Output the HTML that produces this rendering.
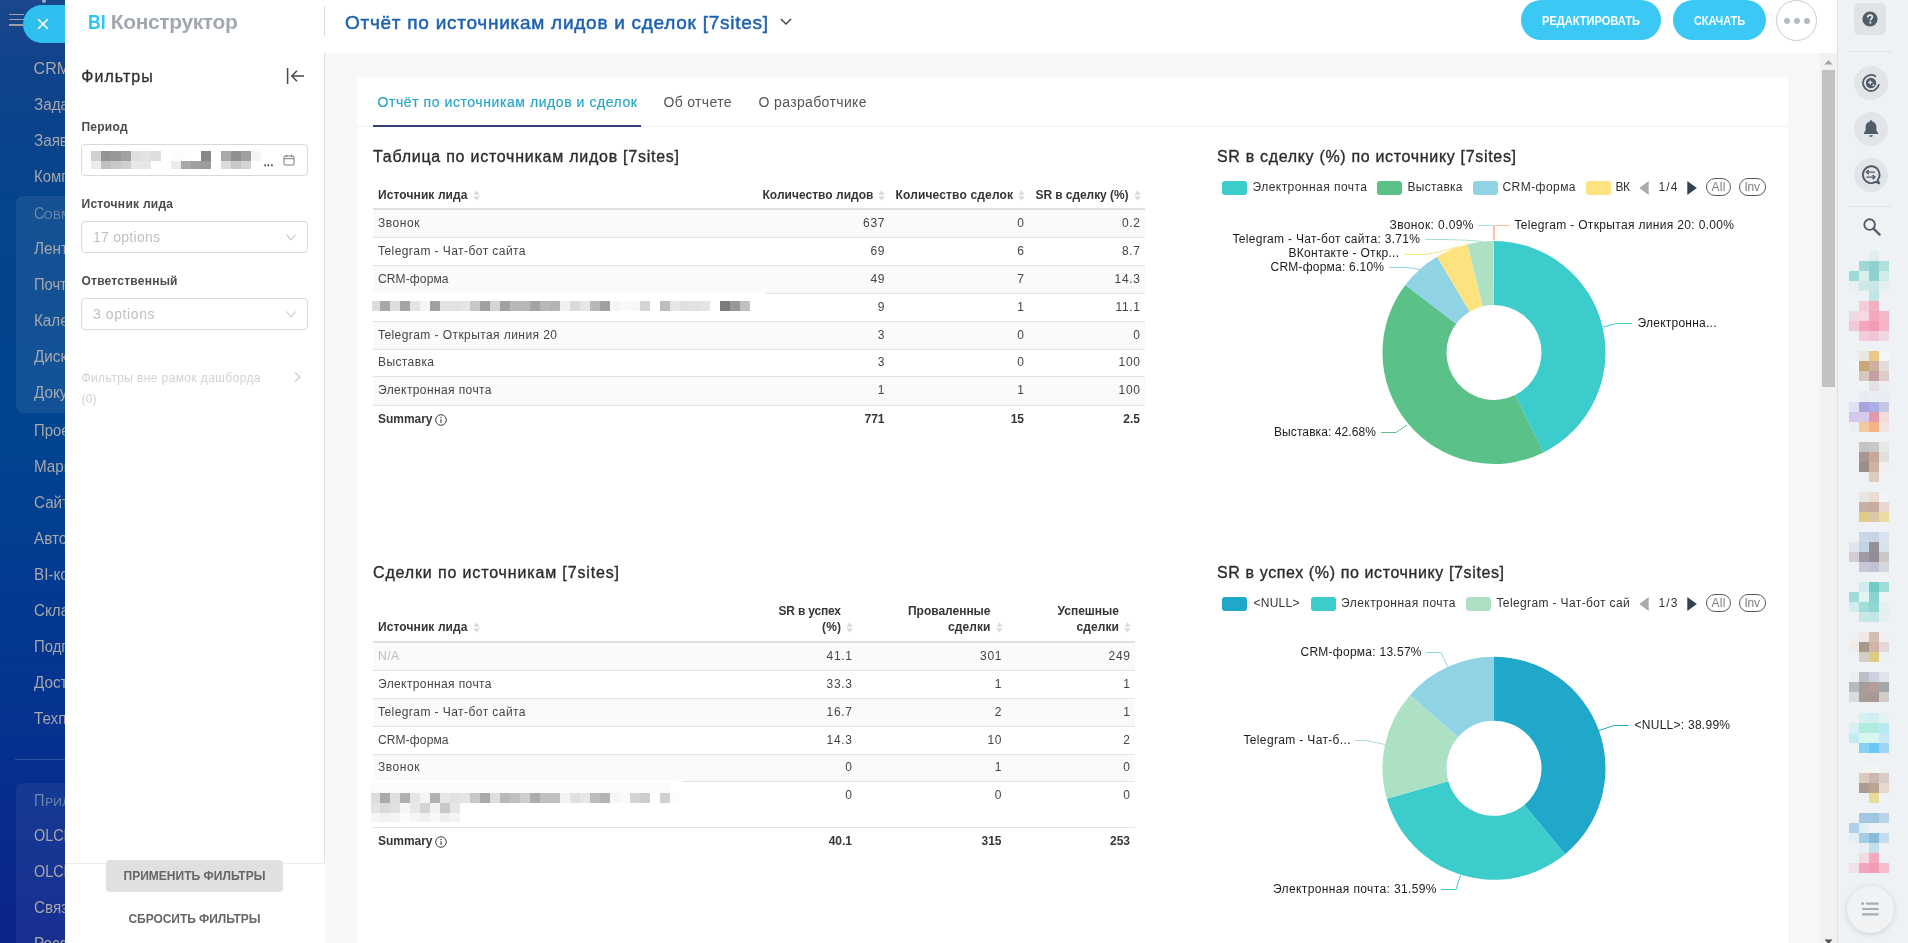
<!DOCTYPE html>
<html lang="ru"><head><meta charset="utf-8"><title>BI Конструктор</title>
<style>
html,body{margin:0;padding:0;}
body{width:1908px;height:943px;overflow:hidden;position:relative;background:#fff;font-family:"Liberation Sans",sans-serif;}
.t{position:absolute;white-space:nowrap;margin:0;padding:0;}
.b{position:absolute;box-sizing:border-box;}
svg{position:absolute;overflow:visible;}
</style></head><body><div style="position:absolute;left:0;top:0;width:1908px;height:943px;overflow:hidden;will-change:transform;">
<div class="b" style="left:0px;top:0px;width:66px;height:943px;background:linear-gradient(180deg,#1b478b 0%,#10438c 7%,#04448b 21%,#00458f 45%,#023b91 61%,#06308f 80%,#0a238b 100%);"></div>
<div class="b" style="left:16px;top:196px;width:60px;height:217px;background:rgba(255,255,255,0.07);border-radius:8px 0 0 8px;"></div>
<div class="b" style="left:16px;top:783px;width:60px;height:170px;background:rgba(255,255,255,0.06);border-radius:8px 0 0 8px;"></div>
<div class="b" style="left:15px;top:759px;width:51px;height:1px;background:rgba(255,255,255,0.16);"></div>
<div class="b" style="left:9px;top:13.6px;width:15px;height:1.5px;background:#a3a1a8;"></div>
<div class="b" style="left:9px;top:18.9px;width:15px;height:1.5px;background:#a3a1a8;"></div>
<div class="b" style="left:9px;top:24.2px;width:15px;height:1.5px;background:#a3a1a8;"></div>
<div class="b" style="left:0;top:0;width:65px;height:943px;overflow:hidden;">
<div class="t" style="left:33.60px;top:57.59px;font-size:16px;line-height:22px;color:#a8a7a9;transform:scaleX(1.0);transform-origin:0 0;">CRM</div>
<div class="t" style="left:33.60px;top:93.59px;font-size:16px;line-height:22px;color:#a8a7a9;transform:scaleX(0.95);transform-origin:0 0;">Задачи</div>
<div class="t" style="left:33.60px;top:129.59px;font-size:16px;line-height:22px;color:#a8a7a9;transform:scaleX(0.95);transform-origin:0 0;">Заявки</div>
<div class="t" style="left:33.60px;top:165.59px;font-size:16px;line-height:22px;color:#a8a7a9;transform:scaleX(0.93);transform-origin:0 0;">Компания</div>
<div class="t" style="left:33.60px;top:237.59px;font-size:16px;line-height:22px;color:#a8a7a9;transform:scaleX(0.96);transform-origin:0 0;">Лента</div>
<div class="t" style="left:33.60px;top:273.59px;font-size:16px;line-height:22px;color:#a8a7a9;transform:scaleX(0.92);transform-origin:0 0;">Почта</div>
<div class="t" style="left:33.60px;top:309.59px;font-size:16px;line-height:22px;color:#a8a7a9;transform:scaleX(0.95);transform-origin:0 0;">Календарь</div>
<div class="t" style="left:33.60px;top:345.59px;font-size:16px;line-height:22px;color:#a8a7a9;transform:scaleX(0.95);transform-origin:0 0;">Диск</div>
<div class="t" style="left:33.60px;top:381.59px;font-size:16px;line-height:22px;color:#a8a7a9;transform:scaleX(0.95);transform-origin:0 0;">Документы</div>
<div class="t" style="left:33.60px;top:419.69px;font-size:16px;line-height:22px;color:#a8a7a9;transform:scaleX(0.93);transform-origin:0 0;">Проекты</div>
<div class="t" style="left:33.60px;top:455.69px;font-size:16px;line-height:22px;color:#a8a7a9;transform:scaleX(0.95);transform-origin:0 0;">Маркетинг</div>
<div class="t" style="left:33.60px;top:491.69px;font-size:16px;line-height:22px;color:#a8a7a9;transform:scaleX(0.95);transform-origin:0 0;">Сайты</div>
<div class="t" style="left:33.60px;top:527.69px;font-size:16px;line-height:22px;color:#a8a7a9;transform:scaleX(0.95);transform-origin:0 0;">Автоматизация</div>
<div class="t" style="left:33.60px;top:563.69px;font-size:16px;line-height:22px;color:#a8a7a9;transform:scaleX(0.95);transform-origin:0 0;">BI-конструктор</div>
<div class="t" style="left:33.60px;top:599.69px;font-size:16px;line-height:22px;color:#a8a7a9;transform:scaleX(0.95);transform-origin:0 0;">Складской учёт</div>
<div class="t" style="left:33.60px;top:635.69px;font-size:16px;line-height:22px;color:#a8a7a9;transform:scaleX(0.93);transform-origin:0 0;">Подпись</div>
<div class="t" style="left:33.60px;top:671.69px;font-size:16px;line-height:22px;color:#a8a7a9;transform:scaleX(0.95);transform-origin:0 0;">Доступы</div>
<div class="t" style="left:33.60px;top:707.69px;font-size:16px;line-height:22px;color:#a8a7a9;transform:scaleX(0.95);transform-origin:0 0;">Техподдержка</div>
<div class="t" style="left:33.60px;top:824.69px;font-size:16px;line-height:22px;color:#a8a7a9;transform:scaleX(0.9);transform-origin:0 0;">OLCHA</div>
<div class="t" style="left:33.60px;top:860.69px;font-size:16px;line-height:22px;color:#a8a7a9;transform:scaleX(0.9);transform-origin:0 0;">OLCHA</div>
<div class="t" style="left:33.60px;top:896.69px;font-size:16px;line-height:22px;color:#a8a7a9;transform:scaleX(0.95);transform-origin:0 0;">Связь</div>
<div class="t" style="left:33.60px;top:932.69px;font-size:16px;line-height:22px;color:#a8a7a9;transform:scaleX(0.95);transform-origin:0 0;">Россия</div>
<div class="t" style="left:33.60px;top:202.69px;font-size:16px;line-height:22px;color:#6e89ab;transform:scaleX(0.9);transform-origin:0 0;">С</div>
<div class="t" style="left:43.60px;top:206.84px;font-size:11.8px;line-height:17px;color:#6e89ab;letter-spacing:0.3px;">ОВМЕСТНАЯ</div>
<div class="t" style="left:33.60px;top:789.69px;font-size:16px;line-height:22px;color:#6e89ab;transform:scaleX(0.9);transform-origin:0 0;">П</div>
<div class="t" style="left:45.20px;top:793.84px;font-size:11.8px;line-height:17px;color:#6e89ab;letter-spacing:0.3px;">РИЛОЖЕНИЯ</div>
</div>
<div class="b" style="left:42px;top:0px;width:3.5px;height:3.2px;background:rgba(255,255,255,0.55);border-radius:0 0 2px 2px;"></div>
<div class="b" style="left:65px;top:0px;width:1772px;height:943px;background:#fff;"></div>
<div class="b" style="left:23px;top:5px;width:42px;height:38px;background:#2fc0f0;border-radius:19px 0 0 19px;"></div>
<svg style="left:37px;top:18px" width="12" height="12" viewBox="0 0 12 12"><path d="M1.2 1.2 L10.8 10.8 M10.8 1.2 L1.2 10.8" stroke="#fff" stroke-width="1.6" fill="none"/></svg>
<div class="t" style="left:88.30px;top:7.35px;font-size:21px;line-height:29px;color:#2fc6f6;font-weight:700;transform:scaleX(0.8381);transform-origin:0 0;">BI</div>
<div class="t" style="left:110.80px;top:7.35px;font-size:21px;line-height:29px;color:#a3a8b0;font-weight:700;letter-spacing:-0.370px;">Конструктор</div>
<div class="b" style="left:324px;top:6px;width:1px;height:30px;background:#d5d9e0;"></div>
<div class="t" style="left:345.00px;top:8.73px;font-size:19px;line-height:27px;color:#1d62b0;letter-spacing:0.732px;-webkit-text-stroke:0.5px #1d62b0;">Отчёт по источникам лидов и сделок [7sites]</div>
<svg style="left:780px;top:17px" width="12" height="10" viewBox="0 0 12 10"><path d="M0.9 2 L6 7 L11.1 2" stroke="#3a4652" stroke-width="1.5" fill="none"/></svg>
<div class="b" style="left:1521px;top:0px;width:140px;height:40px;background:#3bc8f5;border-radius:20px;"></div>
<div class="t" style="left:1542.00px;top:12.84px;font-size:12px;line-height:17px;color:#fff;font-weight:700;transform:scaleX(0.9239);transform-origin:0 0;">РЕДАКТИРОВАТЬ</div>
<div class="b" style="left:1673px;top:0px;width:93px;height:40px;background:#3bc8f5;border-radius:20px;"></div>
<div class="t" style="left:1694.00px;top:12.84px;font-size:12px;line-height:17px;color:#fff;font-weight:700;transform:scaleX(0.9075);transform-origin:0 0;">СКАЧАТЬ</div>
<div class="b" style="left:1776px;top:0px;width:41px;height:41px;background:#fff;border-radius:50%;border:1px solid #c6cdd3;"></div>
<div class="b" style="left:1783.5px;top:17.5px;width:6px;height:6px;background:#b5babf;border-radius:50%;"></div>
<div class="b" style="left:1793.5px;top:17.5px;width:6px;height:6px;background:#b5babf;border-radius:50%;"></div>
<div class="b" style="left:1803.5px;top:17.5px;width:6px;height:6px;background:#b5babf;border-radius:50%;"></div>
<div class="b" style="left:324px;top:53px;width:1px;height:811px;background:#e2e3e6;"></div>
<div class="t" style="left:81.20px;top:65.59px;font-size:16px;line-height:22px;color:#303030;letter-spacing:1.058px;-webkit-text-stroke:0.3px #303030;">Фильтры</div>
<svg style="left:286px;top:68px" width="19" height="16" viewBox="0 0 19 16"><path d="M1.6 0 V16 M18 8 H6 M11 2.8 L5.8 8 L11 13.2" stroke="#484848" stroke-width="1.5" fill="none"/></svg>
<div class="t" style="left:81.50px;top:118.64px;font-size:12px;line-height:17px;color:#4c4c4c;font-weight:700;letter-spacing:0.241px;">Период</div>
<div class="b" style="left:81px;top:144px;width:227px;height:32px;background:#fff;border:1px solid #d9d9d9;border-radius:4px;"></div>
<div class="t" style="left:81.50px;top:195.64px;font-size:12px;line-height:17px;color:#4c4c4c;font-weight:700;letter-spacing:0.269px;">Источник лида</div>
<div class="b" style="left:81px;top:221px;width:227px;height:32px;background:#fff;border:1px solid #d9d9d9;border-radius:4px;"></div>
<div class="t" style="left:93.00px;top:226.97px;font-size:14px;line-height:20px;color:#bfbfbf;letter-spacing:0.266px;">17 options</div>
<div class="t" style="left:81.50px;top:272.64px;font-size:12px;line-height:17px;color:#4c4c4c;font-weight:700;letter-spacing:0.231px;">Ответственный</div>
<div class="b" style="left:81px;top:298px;width:227px;height:32px;background:#fff;border:1px solid #d9d9d9;border-radius:4px;"></div>
<div class="t" style="left:93.00px;top:303.97px;font-size:14px;line-height:20px;color:#bfbfbf;letter-spacing:0.585px;">3 options</div>
<svg style="left:285px;top:233px" width="12" height="9" viewBox="0 0 12 9"><path d="M1.5 1.5 L6 7 L10.5 1.5" stroke="#c4c4c4" stroke-width="1.1" fill="none"/></svg>
<svg style="left:285px;top:310px" width="12" height="9" viewBox="0 0 12 9"><path d="M1.5 1.5 L6 7 L10.5 1.5" stroke="#c4c4c4" stroke-width="1.1" fill="none"/></svg>
<svg style="left:283px;top:154px" width="12" height="12" viewBox="0 0 12 12"><rect x="1" y="2" width="10" height="9" rx="1" stroke="#787878" stroke-width="1" fill="none"/><path d="M1 4.7 H11 M3.5 0.8 V3 M8.5 0.8 V3" stroke="#787878" stroke-width="1" fill="none"/></svg>
<div class="t" style="left:263.50px;top:153.64px;font-size:12px;line-height:17px;color:#333;letter-spacing:-0.001px;-webkit-text-stroke:0.3px #333;">...</div>
<div class="t" style="left:81.50px;top:369.64px;font-size:12px;line-height:17px;color:#d2d2d2;letter-spacing:0.398px;">Фильтры вне рамок дашборда</div>
<div class="t" style="left:81.50px;top:391.14px;font-size:12px;line-height:17px;color:#d2d2d2;letter-spacing:0.167px;">(0)</div>
<svg style="left:293px;top:371px" width="9" height="12" viewBox="0 0 9 12"><path d="M2 1.5 L7 6 L2 10.5" stroke="#c8c8c8" stroke-width="1.1" fill="none"/></svg>
<div class="b" style="left:65px;top:863px;width:260px;height:1px;background:#ececec;"></div>
<div class="b" style="left:106px;top:860px;width:177px;height:32px;background:#e0e0e0;border-radius:4px;"></div>
<div class="t" style="left:123.50px;top:867.84px;font-size:12px;line-height:17px;color:#666666;font-weight:700;letter-spacing:0.024px;">ПРИМЕНИТЬ ФИЛЬТРЫ</div>
<div class="t" style="left:128.50px;top:911.24px;font-size:12px;line-height:17px;color:#666666;font-weight:700;letter-spacing:-0.055px;">СБРОСИТЬ ФИЛЬТРЫ</div>
<div class="b" style="left:325px;top:53px;width:1512px;height:890px;background:#f7f7f7;"></div>
<div class="b" style="left:357px;top:77px;width:1431px;height:866px;background:#fff;"></div>
<div class="b" style="left:1820px;top:53px;width:17px;height:890px;background:#f1f1f1;"></div>
<div class="b" style="left:1822px;top:70px;width:13px;height:317px;background:#c1c1c1;"></div>
<svg style="left:1824px;top:58.5px" width="9" height="6" viewBox="0 0 9 6"><path d="M0.5 5.5 L4.5 1 L8.5 5.5 Z" fill="#a3a3a3"/></svg>
<svg style="left:1824px;top:938.5px" width="9" height="6" viewBox="0 0 9 6"><path d="M0.5 0.5 L4.5 5 L8.5 0.5 Z" fill="#505050"/></svg>
<div class="b" style="left:357px;top:126px;width:1431px;height:1px;background:#f0f0f0;"></div>
<div class="b" style="left:373px;top:125px;width:268px;height:2px;background:#364080;"></div>
<div class="t" style="left:377.50px;top:92.17px;font-size:14px;line-height:20px;color:#27a5cb;letter-spacing:0.567px;-webkit-text-stroke:0.2px #27a5cb;">Отчёт по источникам лидов и сделок</div>
<div class="t" style="left:663.50px;top:92.17px;font-size:14px;line-height:20px;color:#555;letter-spacing:0.332px;">Об отчете</div>
<div class="t" style="left:758.50px;top:92.17px;font-size:14px;line-height:20px;color:#555;letter-spacing:0.363px;">О разработчике</div>
<div class="t" style="left:373.00px;top:145.69px;font-size:16px;line-height:22px;color:#2b2b2b;letter-spacing:0.750px;-webkit-text-stroke:0.33px #2b2b2b;">Таблица по источникам лидов [7sites]</div>
<div class="t" style="left:378.00px;top:186.64px;font-size:12px;line-height:17px;color:#363636;font-weight:700;letter-spacing:0.102px;">Источник лида</div>
<svg style="left:473px;top:189.5px" width="7" height="11" viewBox="0 0 7 11"><path d="M0.2 4.7 L3.5 0.3 L6.8 4.7 Z M0.2 6.3 L3.5 10.7 L6.8 6.3 Z" fill="#dadada"/></svg>
<div class="t" style="left:762.50px;top:186.64px;font-size:12px;line-height:17px;color:#363636;font-weight:700;letter-spacing:0.027px;">Количество лидов</div>
<svg style="left:878.4px;top:189.5px" width="7" height="11" viewBox="0 0 7 11"><path d="M0.2 4.7 L3.5 0.3 L6.8 4.7 Z M0.2 6.3 L3.5 10.7 L6.8 6.3 Z" fill="#dadada"/></svg>
<div class="t" style="left:895.50px;top:186.64px;font-size:12px;line-height:17px;color:#363636;font-weight:700;letter-spacing:0.154px;">Количество сделок</div>
<svg style="left:1017.6px;top:189.5px" width="7" height="11" viewBox="0 0 7 11"><path d="M0.2 4.7 L3.5 0.3 L6.8 4.7 Z M0.2 6.3 L3.5 10.7 L6.8 6.3 Z" fill="#dadada"/></svg>
<div class="t" style="left:1035.50px;top:186.64px;font-size:12px;line-height:17px;color:#363636;font-weight:700;letter-spacing:-0.070px;">SR в сделку (%)</div>
<svg style="left:1133.8px;top:189.5px" width="7" height="11" viewBox="0 0 7 11"><path d="M0.2 4.7 L3.5 0.3 L6.8 4.7 Z M0.2 6.3 L3.5 10.7 L6.8 6.3 Z" fill="#dadada"/></svg>
<div class="b" style="left:373px;top:208px;width:772px;height:2px;background:#e0e0e0;"></div>
<div class="b" style="left:373px;top:210px;width:772px;height:27px;background:#fafafa;"></div>
<div class="b" style="left:373px;top:266px;width:772px;height:27px;background:#fafafa;"></div>
<div class="b" style="left:373px;top:322px;width:772px;height:27px;background:#fafafa;"></div>
<div class="b" style="left:373px;top:377px;width:772px;height:28px;background:#fafafa;"></div>
<div class="b" style="left:373px;top:237px;width:772px;height:1px;background:#e4e4e4;"></div>
<div class="b" style="left:373px;top:265px;width:772px;height:1px;background:#e4e4e4;"></div>
<div class="b" style="left:373px;top:293px;width:772px;height:1px;background:#e4e4e4;"></div>
<div class="b" style="left:373px;top:321px;width:772px;height:1px;background:#e4e4e4;"></div>
<div class="b" style="left:373px;top:349px;width:772px;height:1px;background:#e4e4e4;"></div>
<div class="b" style="left:373px;top:376px;width:772px;height:1px;background:#e4e4e4;"></div>
<div class="b" style="left:373px;top:405px;width:772px;height:1px;background:#e4e4e4;"></div>
<div class="t" style="left:378.00px;top:214.64px;font-size:12px;line-height:17px;color:#454545;letter-spacing:0.557px;">Звонок</div>
<div class="t" style="left:863.08px;top:214.64px;font-size:12px;line-height:17px;color:#454545;letter-spacing:0.700px;">637</div>
<div class="t" style="left:1017.33px;top:214.64px;font-size:12px;line-height:17px;color:#454545;">0</div>
<div class="t" style="left:1121.92px;top:214.64px;font-size:12px;line-height:17px;color:#454545;letter-spacing:0.700px;">0.2</div>
<div class="t" style="left:378.00px;top:242.64px;font-size:12px;line-height:17px;color:#454545;letter-spacing:0.437px;">Telegram - Чат-бот сайта</div>
<div class="t" style="left:870.45px;top:242.64px;font-size:12px;line-height:17px;color:#454545;letter-spacing:0.700px;">69</div>
<div class="t" style="left:1017.33px;top:242.64px;font-size:12px;line-height:17px;color:#454545;">6</div>
<div class="t" style="left:1121.92px;top:242.64px;font-size:12px;line-height:17px;color:#454545;letter-spacing:0.700px;">8.7</div>
<div class="t" style="left:378.00px;top:270.64px;font-size:12px;line-height:17px;color:#454545;letter-spacing:0.129px;">CRM-форма</div>
<div class="t" style="left:870.45px;top:270.64px;font-size:12px;line-height:17px;color:#454545;letter-spacing:0.700px;">49</div>
<div class="t" style="left:1017.33px;top:270.64px;font-size:12px;line-height:17px;color:#454545;">7</div>
<div class="t" style="left:1114.54px;top:270.64px;font-size:12px;line-height:17px;color:#454545;letter-spacing:0.700px;">14.3</div>
<div class="t" style="left:877.83px;top:298.64px;font-size:12px;line-height:17px;color:#454545;">9</div>
<div class="t" style="left:1017.33px;top:298.64px;font-size:12px;line-height:17px;color:#454545;">1</div>
<div class="t" style="left:1115.44px;top:298.64px;font-size:12px;line-height:17px;color:#454545;letter-spacing:0.700px;">11.1</div>
<div class="t" style="left:378.00px;top:326.64px;font-size:12px;line-height:17px;color:#454545;letter-spacing:0.427px;">Telegram - Открытая линия 20</div>
<div class="t" style="left:877.83px;top:326.64px;font-size:12px;line-height:17px;color:#454545;">3</div>
<div class="t" style="left:1017.33px;top:326.64px;font-size:12px;line-height:17px;color:#454545;">0</div>
<div class="t" style="left:1133.33px;top:326.64px;font-size:12px;line-height:17px;color:#454545;">0</div>
<div class="t" style="left:378.00px;top:353.64px;font-size:12px;line-height:17px;color:#454545;letter-spacing:0.396px;">Выставка</div>
<div class="t" style="left:877.83px;top:353.64px;font-size:12px;line-height:17px;color:#454545;">3</div>
<div class="t" style="left:1017.33px;top:353.64px;font-size:12px;line-height:17px;color:#454545;">0</div>
<div class="t" style="left:1118.58px;top:353.64px;font-size:12px;line-height:17px;color:#454545;letter-spacing:0.700px;">100</div>
<div class="t" style="left:378.00px;top:381.64px;font-size:12px;line-height:17px;color:#454545;letter-spacing:0.401px;">Электронная почта</div>
<div class="t" style="left:877.83px;top:381.64px;font-size:12px;line-height:17px;color:#454545;">1</div>
<div class="t" style="left:1017.33px;top:381.64px;font-size:12px;line-height:17px;color:#454545;">1</div>
<div class="t" style="left:1118.58px;top:381.64px;font-size:12px;line-height:17px;color:#454545;letter-spacing:0.700px;">100</div>
<div class="t" style="left:378.00px;top:410.64px;font-size:12px;line-height:17px;color:#363636;font-weight:700;letter-spacing:-0.032px;">Summary</div>
<svg style="left:435px;top:414px" width="12" height="12" viewBox="0 0 12 12"><circle cx="6" cy="6" r="5.3" stroke="#333" stroke-width="0.95" fill="none"/><path d="M6 5.2 V8.8" stroke="#333" stroke-width="1.1"/><circle cx="6" cy="3.5" r="0.7" fill="#333"/></svg>
<div class="t" style="left:864.48px;top:410.64px;font-size:12px;line-height:17px;color:#363636;font-weight:700;">771</div>
<div class="t" style="left:1010.65px;top:410.64px;font-size:12px;line-height:17px;color:#363636;font-weight:700;">15</div>
<div class="t" style="left:1123.32px;top:410.64px;font-size:12px;line-height:17px;color:#363636;font-weight:700;">2.5</div>
<div class="t" style="left:373.00px;top:561.69px;font-size:16px;line-height:22px;color:#2b2b2b;letter-spacing:0.853px;-webkit-text-stroke:0.33px #2b2b2b;">Сделки по источникам [7sites]</div>
<div class="t" style="left:378.00px;top:618.64px;font-size:12px;line-height:17px;color:#363636;font-weight:700;letter-spacing:0.102px;">Источник лида</div>
<svg style="left:472.5px;top:622.0px" width="7" height="11" viewBox="0 0 7 11"><path d="M0.2 4.7 L3.5 0.3 L6.8 4.7 Z M0.2 6.3 L3.5 10.7 L6.8 6.3 Z" fill="#dadada"/></svg>
<div class="t" style="left:778.50px;top:602.64px;font-size:12px;line-height:17px;color:#363636;font-weight:700;letter-spacing:-0.189px;">SR в успех</div>
<div class="t" style="left:822.00px;top:618.64px;font-size:12px;line-height:17px;color:#363636;font-weight:700;letter-spacing:0.169px;">(%)</div>
<svg style="left:846px;top:622.0px" width="7" height="11" viewBox="0 0 7 11"><path d="M0.2 4.7 L3.5 0.3 L6.8 4.7 Z M0.2 6.3 L3.5 10.7 L6.8 6.3 Z" fill="#dadada"/></svg>
<div class="t" style="left:908.00px;top:602.64px;font-size:12px;line-height:17px;color:#363636;font-weight:700;letter-spacing:-0.023px;">Проваленные</div>
<div class="t" style="left:948.00px;top:618.64px;font-size:12px;line-height:17px;color:#363636;font-weight:700;letter-spacing:0.106px;">сделки</div>
<svg style="left:995.5px;top:622.0px" width="7" height="11" viewBox="0 0 7 11"><path d="M0.2 4.7 L3.5 0.3 L6.8 4.7 Z M0.2 6.3 L3.5 10.7 L6.8 6.3 Z" fill="#dadada"/></svg>
<div class="t" style="left:1057.50px;top:602.64px;font-size:12px;line-height:17px;color:#363636;font-weight:700;letter-spacing:0.003px;">Успешные</div>
<div class="t" style="left:1076.50px;top:618.64px;font-size:12px;line-height:17px;color:#363636;font-weight:700;letter-spacing:0.106px;">сделки</div>
<svg style="left:1124px;top:622.0px" width="7" height="11" viewBox="0 0 7 11"><path d="M0.2 4.7 L3.5 0.3 L6.8 4.7 Z M0.2 6.3 L3.5 10.7 L6.8 6.3 Z" fill="#dadada"/></svg>
<div class="b" style="left:373px;top:641px;width:762px;height:2px;background:#e0e0e0;"></div>
<div class="b" style="left:373px;top:643px;width:762px;height:27px;background:#fafafa;"></div>
<div class="b" style="left:373px;top:699px;width:762px;height:27px;background:#fafafa;"></div>
<div class="b" style="left:373px;top:755px;width:762px;height:26px;background:#fafafa;"></div>
<div class="b" style="left:373px;top:670px;width:762px;height:1px;background:#e4e4e4;"></div>
<div class="b" style="left:373px;top:698px;width:762px;height:1px;background:#e4e4e4;"></div>
<div class="b" style="left:373px;top:726px;width:762px;height:1px;background:#e4e4e4;"></div>
<div class="b" style="left:373px;top:754px;width:762px;height:1px;background:#e4e4e4;"></div>
<div class="b" style="left:373px;top:781px;width:762px;height:1px;background:#e4e4e4;"></div>
<div class="b" style="left:373px;top:827px;width:762px;height:1px;background:#e4e4e4;"></div>
<div class="t" style="left:378.00px;top:647.64px;font-size:12px;line-height:17px;color:#bdbdbd;letter-spacing:0.498px;">N/A</div>
<div class="t" style="left:826.54px;top:647.64px;font-size:12px;line-height:17px;color:#454545;letter-spacing:0.700px;">41.1</div>
<div class="t" style="left:980.08px;top:647.64px;font-size:12px;line-height:17px;color:#454545;letter-spacing:0.700px;">301</div>
<div class="t" style="left:1108.58px;top:647.64px;font-size:12px;line-height:17px;color:#454545;letter-spacing:0.700px;">249</div>
<div class="t" style="left:378.00px;top:675.64px;font-size:12px;line-height:17px;color:#454545;letter-spacing:0.401px;">Электронная почта</div>
<div class="t" style="left:826.54px;top:675.64px;font-size:12px;line-height:17px;color:#454545;letter-spacing:0.700px;">33.3</div>
<div class="t" style="left:994.83px;top:675.64px;font-size:12px;line-height:17px;color:#454545;">1</div>
<div class="t" style="left:1123.33px;top:675.64px;font-size:12px;line-height:17px;color:#454545;">1</div>
<div class="t" style="left:378.00px;top:703.64px;font-size:12px;line-height:17px;color:#454545;letter-spacing:0.437px;">Telegram - Чат-бот сайта</div>
<div class="t" style="left:826.54px;top:703.64px;font-size:12px;line-height:17px;color:#454545;letter-spacing:0.700px;">16.7</div>
<div class="t" style="left:994.83px;top:703.64px;font-size:12px;line-height:17px;color:#454545;">2</div>
<div class="t" style="left:1123.33px;top:703.64px;font-size:12px;line-height:17px;color:#454545;">1</div>
<div class="t" style="left:378.00px;top:731.64px;font-size:12px;line-height:17px;color:#454545;letter-spacing:0.129px;">CRM-форма</div>
<div class="t" style="left:826.54px;top:731.64px;font-size:12px;line-height:17px;color:#454545;letter-spacing:0.700px;">14.3</div>
<div class="t" style="left:987.45px;top:731.64px;font-size:12px;line-height:17px;color:#454545;letter-spacing:0.700px;">10</div>
<div class="t" style="left:1123.33px;top:731.64px;font-size:12px;line-height:17px;color:#454545;">2</div>
<div class="t" style="left:378.00px;top:758.64px;font-size:12px;line-height:17px;color:#454545;letter-spacing:0.557px;">Звонок</div>
<div class="t" style="left:845.33px;top:758.64px;font-size:12px;line-height:17px;color:#454545;">0</div>
<div class="t" style="left:994.83px;top:758.64px;font-size:12px;line-height:17px;color:#454545;">1</div>
<div class="t" style="left:1123.33px;top:758.64px;font-size:12px;line-height:17px;color:#454545;">0</div>
<div class="t" style="left:845.33px;top:786.64px;font-size:12px;line-height:17px;color:#454545;">0</div>
<div class="t" style="left:994.83px;top:786.64px;font-size:12px;line-height:17px;color:#454545;">0</div>
<div class="t" style="left:1123.33px;top:786.64px;font-size:12px;line-height:17px;color:#454545;">0</div>
<div class="t" style="left:378.00px;top:832.64px;font-size:12px;line-height:17px;color:#363636;font-weight:700;letter-spacing:-0.032px;">Summary</div>
<svg style="left:435px;top:836px" width="12" height="12" viewBox="0 0 12 12"><circle cx="6" cy="6" r="5.3" stroke="#333" stroke-width="0.95" fill="none"/><path d="M6 5.2 V8.8" stroke="#333" stroke-width="1.1"/><circle cx="6" cy="3.5" r="0.7" fill="#333"/></svg>
<div class="t" style="left:828.64px;top:832.64px;font-size:12px;line-height:17px;color:#363636;font-weight:700;">40.1</div>
<div class="t" style="left:981.48px;top:832.64px;font-size:12px;line-height:17px;color:#363636;font-weight:700;">315</div>
<div class="t" style="left:1109.98px;top:832.64px;font-size:12px;line-height:17px;color:#363636;font-weight:700;">253</div>
<div class="b" style="left:371px;top:292px;width:394px;height:21px;background:#fff;"></div>
<div class="b" style="left:372px;top:301px;width:8px;height:10px;background:#dcdcdc;"></div>
<div class="b" style="left:380px;top:301px;width:10px;height:10px;background:#a8a8a8;"></div>
<div class="b" style="left:390px;top:301px;width:10px;height:10px;background:#dedede;"></div>
<div class="b" style="left:400px;top:301px;width:10px;height:10px;background:#a4a4a4;"></div>
<div class="b" style="left:410px;top:301px;width:10px;height:10px;background:#e4e4e4;"></div>
<div class="b" style="left:420px;top:301px;width:10px;height:10px;background:#f4f4f4;"></div>
<div class="b" style="left:430px;top:301px;width:10px;height:10px;background:#a0a0a0;"></div>
<div class="b" style="left:440px;top:301px;width:10px;height:10px;background:#e2e2e2;"></div>
<div class="b" style="left:450px;top:301px;width:10px;height:10px;background:#e2e2e2;"></div>
<div class="b" style="left:460px;top:301px;width:10px;height:10px;background:#e4e4e4;"></div>
<div class="b" style="left:470px;top:301px;width:10px;height:10px;background:#c8c8c8;"></div>
<div class="b" style="left:480px;top:301px;width:10px;height:10px;background:#a0a0a0;"></div>
<div class="b" style="left:490px;top:301px;width:10px;height:10px;background:#d4d4d4;"></div>
<div class="b" style="left:500px;top:301px;width:10px;height:10px;background:#a0a0a0;"></div>
<div class="b" style="left:510px;top:301px;width:10px;height:10px;background:#b8b8b8;"></div>
<div class="b" style="left:520px;top:301px;width:10px;height:10px;background:#b8b8b8;"></div>
<div class="b" style="left:530px;top:301px;width:10px;height:10px;background:#a4a4a4;"></div>
<div class="b" style="left:540px;top:301px;width:10px;height:10px;background:#b8b8b8;"></div>
<div class="b" style="left:550px;top:301px;width:10px;height:10px;background:#b4b4b4;"></div>
<div class="b" style="left:560px;top:301px;width:10px;height:10px;background:#f0f0f0;"></div>
<div class="b" style="left:570px;top:301px;width:10px;height:10px;background:#dadada;"></div>
<div class="b" style="left:580px;top:301px;width:10px;height:10px;background:#e6e6e6;"></div>
<div class="b" style="left:590px;top:301px;width:10px;height:10px;background:#b8b8b8;"></div>
<div class="b" style="left:600px;top:301px;width:10px;height:10px;background:#a0a0a0;"></div>
<div class="b" style="left:610px;top:301px;width:10px;height:10px;background:#f4f4f4;"></div>
<div class="b" style="left:620px;top:301px;width:10px;height:10px;background:#fafafa;"></div>
<div class="b" style="left:630px;top:301px;width:10px;height:10px;background:#f8f8f8;"></div>
<div class="b" style="left:640px;top:301px;width:10px;height:10px;background:#d4d4d4;"></div>
<div class="b" style="left:660px;top:301px;width:10px;height:10px;background:#bebebe;"></div>
<div class="b" style="left:670px;top:301px;width:10px;height:10px;background:#e6e6e6;"></div>
<div class="b" style="left:680px;top:301px;width:10px;height:10px;background:#e0e0e0;"></div>
<div class="b" style="left:690px;top:301px;width:10px;height:10px;background:#e2e2e2;"></div>
<div class="b" style="left:700px;top:301px;width:10px;height:10px;background:#e4e4e4;"></div>
<div class="b" style="left:720px;top:301px;width:10px;height:10px;background:#7c7c7c;"></div>
<div class="b" style="left:730px;top:301px;width:10px;height:10px;background:#989898;"></div>
<div class="b" style="left:740px;top:301px;width:10px;height:10px;background:#c0c0c0;"></div>
<div class="b" style="left:371px;top:780px;width:311px;height:43px;background:#fff;"></div>
<div class="b" style="left:371px;top:783px;width:9px;height:10px;background:#fbfbfb;"></div>
<div class="b" style="left:380px;top:783px;width:10px;height:10px;background:#fbfbfb;"></div>
<div class="b" style="left:390px;top:783px;width:10px;height:10px;background:#fbfbfb;"></div>
<div class="b" style="left:400px;top:783px;width:10px;height:10px;background:#fbfbfb;"></div>
<div class="b" style="left:410px;top:783px;width:10px;height:10px;background:#fbfbfb;"></div>
<div class="b" style="left:420px;top:783px;width:10px;height:10px;background:#fbfbfb;"></div>
<div class="b" style="left:430px;top:783px;width:10px;height:10px;background:#fbfbfb;"></div>
<div class="b" style="left:440px;top:783px;width:10px;height:10px;background:#fbfbfb;"></div>
<div class="b" style="left:450px;top:783px;width:10px;height:10px;background:#fbfbfb;"></div>
<div class="b" style="left:460px;top:783px;width:10px;height:10px;background:#fbfbfb;"></div>
<div class="b" style="left:470px;top:783px;width:10px;height:10px;background:#fbfbfb;"></div>
<div class="b" style="left:480px;top:783px;width:10px;height:10px;background:#fbfbfb;"></div>
<div class="b" style="left:490px;top:783px;width:10px;height:10px;background:#fbfbfb;"></div>
<div class="b" style="left:500px;top:783px;width:10px;height:10px;background:#fbfbfb;"></div>
<div class="b" style="left:510px;top:783px;width:10px;height:10px;background:#fbfbfb;"></div>
<div class="b" style="left:520px;top:783px;width:10px;height:10px;background:#fbfbfb;"></div>
<div class="b" style="left:530px;top:783px;width:10px;height:10px;background:#fbfbfb;"></div>
<div class="b" style="left:540px;top:783px;width:10px;height:10px;background:#fbfbfb;"></div>
<div class="b" style="left:550px;top:783px;width:10px;height:10px;background:#fbfbfb;"></div>
<div class="b" style="left:560px;top:783px;width:10px;height:10px;background:#fbfbfb;"></div>
<div class="b" style="left:570px;top:783px;width:10px;height:10px;background:#fbfbfb;"></div>
<div class="b" style="left:580px;top:783px;width:10px;height:10px;background:#fbfbfb;"></div>
<div class="b" style="left:590px;top:783px;width:10px;height:10px;background:#fbfbfb;"></div>
<div class="b" style="left:600px;top:783px;width:10px;height:10px;background:#fbfbfb;"></div>
<div class="b" style="left:610px;top:783px;width:10px;height:10px;background:#fbfbfb;"></div>
<div class="b" style="left:620px;top:783px;width:10px;height:10px;background:#fbfbfb;"></div>
<div class="b" style="left:630px;top:783px;width:10px;height:10px;background:#fbfbfb;"></div>
<div class="b" style="left:640px;top:783px;width:10px;height:10px;background:#fbfbfb;"></div>
<div class="b" style="left:650px;top:783px;width:10px;height:10px;background:#fbfbfb;"></div>
<div class="b" style="left:660px;top:783px;width:10px;height:10px;background:#fbfbfb;"></div>
<div class="b" style="left:371px;top:793px;width:9px;height:10px;background:#dedede;"></div>
<div class="b" style="left:380px;top:793px;width:10px;height:10px;background:#aaaaaa;"></div>
<div class="b" style="left:390px;top:793px;width:10px;height:10px;background:#dedede;"></div>
<div class="b" style="left:400px;top:793px;width:10px;height:10px;background:#b0b0b0;"></div>
<div class="b" style="left:410px;top:793px;width:10px;height:10px;background:#e6e6e6;"></div>
<div class="b" style="left:420px;top:793px;width:10px;height:10px;background:#f4f4f4;"></div>
<div class="b" style="left:430px;top:793px;width:10px;height:10px;background:#b0b0b0;"></div>
<div class="b" style="left:440px;top:793px;width:10px;height:10px;background:#e6e6e6;"></div>
<div class="b" style="left:450px;top:793px;width:10px;height:10px;background:#e2e2e2;"></div>
<div class="b" style="left:460px;top:793px;width:10px;height:10px;background:#e4e4e4;"></div>
<div class="b" style="left:470px;top:793px;width:10px;height:10px;background:#c8c8c8;"></div>
<div class="b" style="left:480px;top:793px;width:10px;height:10px;background:#aaaaaa;"></div>
<div class="b" style="left:490px;top:793px;width:10px;height:10px;background:#dedede;"></div>
<div class="b" style="left:500px;top:793px;width:10px;height:10px;background:#b8b8b8;"></div>
<div class="b" style="left:510px;top:793px;width:10px;height:10px;background:#c0c0c0;"></div>
<div class="b" style="left:520px;top:793px;width:10px;height:10px;background:#cecece;"></div>
<div class="b" style="left:530px;top:793px;width:10px;height:10px;background:#acacac;"></div>
<div class="b" style="left:540px;top:793px;width:10px;height:10px;background:#c0c0c0;"></div>
<div class="b" style="left:550px;top:793px;width:10px;height:10px;background:#c0c0c0;"></div>
<div class="b" style="left:560px;top:793px;width:10px;height:10px;background:#f2f2f2;"></div>
<div class="b" style="left:570px;top:793px;width:10px;height:10px;background:#e0e0e0;"></div>
<div class="b" style="left:580px;top:793px;width:10px;height:10px;background:#e8e8e8;"></div>
<div class="b" style="left:590px;top:793px;width:10px;height:10px;background:#bcbcbc;"></div>
<div class="b" style="left:600px;top:793px;width:10px;height:10px;background:#b4b4b4;"></div>
<div class="b" style="left:610px;top:793px;width:10px;height:10px;background:#f6f6f6;"></div>
<div class="b" style="left:620px;top:793px;width:10px;height:10px;background:#fafafa;"></div>
<div class="b" style="left:630px;top:793px;width:10px;height:10px;background:#d4d4d4;"></div>
<div class="b" style="left:640px;top:793px;width:10px;height:10px;background:#cccccc;"></div>
<div class="b" style="left:660px;top:793px;width:10px;height:10px;background:#d0d0d0;"></div>
<div class="b" style="left:670px;top:793px;width:10px;height:10px;background:#fcfcfc;"></div>
<div class="b" style="left:371px;top:803px;width:9px;height:10px;background:#e4e4e4;"></div>
<div class="b" style="left:380px;top:803px;width:10px;height:10px;background:#dadada;"></div>
<div class="b" style="left:390px;top:803px;width:10px;height:10px;background:#e0e0e0;"></div>
<div class="b" style="left:400px;top:803px;width:10px;height:10px;background:#f6f6f6;"></div>
<div class="b" style="left:410px;top:803px;width:10px;height:10px;background:#e8e8e8;"></div>
<div class="b" style="left:420px;top:803px;width:10px;height:10px;background:#d4d4d4;"></div>
<div class="b" style="left:430px;top:803px;width:10px;height:10px;background:#f2f2f2;"></div>
<div class="b" style="left:440px;top:803px;width:10px;height:10px;background:#c8c8c8;"></div>
<div class="b" style="left:450px;top:803px;width:10px;height:10px;background:#e6e6e6;"></div>
<div class="b" style="left:371px;top:813px;width:9px;height:9px;background:#f6f6f6;"></div>
<div class="b" style="left:380px;top:813px;width:10px;height:9px;background:#f2f2f2;"></div>
<div class="b" style="left:390px;top:813px;width:10px;height:9px;background:#f4f4f4;"></div>
<div class="b" style="left:400px;top:813px;width:10px;height:9px;background:#fcfcfc;"></div>
<div class="b" style="left:410px;top:813px;width:10px;height:9px;background:#f6f6f6;"></div>
<div class="b" style="left:420px;top:813px;width:10px;height:9px;background:#f0f0f0;"></div>
<div class="b" style="left:430px;top:813px;width:10px;height:9px;background:#f8f8f8;"></div>
<div class="b" style="left:440px;top:813px;width:10px;height:9px;background:#eeeeee;"></div>
<div class="b" style="left:450px;top:813px;width:10px;height:9px;background:#f4f4f4;"></div>
<div class="b" style="left:91px;top:151px;width:10px;height:10px;background:#d0d0d0;"></div>
<div class="b" style="left:101px;top:151px;width:10px;height:10px;background:#949494;"></div>
<div class="b" style="left:111px;top:151px;width:10px;height:10px;background:#989898;"></div>
<div class="b" style="left:121px;top:151px;width:10px;height:10px;background:#a0a0a0;"></div>
<div class="b" style="left:131px;top:151px;width:10px;height:10px;background:#e0e0e0;"></div>
<div class="b" style="left:141px;top:151px;width:10px;height:10px;background:#e2e2e2;"></div>
<div class="b" style="left:151px;top:151px;width:10px;height:10px;background:#dedede;"></div>
<div class="b" style="left:171px;top:151px;width:10px;height:10px;background:#fcfcfc;"></div>
<div class="b" style="left:181px;top:151px;width:10px;height:10px;background:#fdfdfd;"></div>
<div class="b" style="left:201px;top:151px;width:10px;height:10px;background:#888888;"></div>
<div class="b" style="left:221px;top:151px;width:10px;height:10px;background:#a8a8a8;"></div>
<div class="b" style="left:231px;top:151px;width:10px;height:10px;background:#909090;"></div>
<div class="b" style="left:241px;top:151px;width:10px;height:10px;background:#a0a0a0;"></div>
<div class="b" style="left:251px;top:151px;width:10px;height:10px;background:#f4f4f4;"></div>
<div class="b" style="left:91px;top:161px;width:10px;height:8px;background:#ececec;"></div>
<div class="b" style="left:101px;top:161px;width:10px;height:8px;background:#c0c0c0;"></div>
<div class="b" style="left:111px;top:161px;width:10px;height:8px;background:#c8c8c8;"></div>
<div class="b" style="left:121px;top:161px;width:10px;height:8px;background:#cecece;"></div>
<div class="b" style="left:131px;top:161px;width:10px;height:8px;background:#e8e8e8;"></div>
<div class="b" style="left:141px;top:161px;width:10px;height:8px;background:#e6e6e6;"></div>
<div class="b" style="left:171px;top:161px;width:10px;height:8px;background:#ececec;"></div>
<div class="b" style="left:181px;top:161px;width:10px;height:8px;background:#a8a8a8;"></div>
<div class="b" style="left:191px;top:161px;width:10px;height:8px;background:#a0a0a0;"></div>
<div class="b" style="left:201px;top:161px;width:10px;height:8px;background:#9c9c9c;"></div>
<div class="b" style="left:221px;top:161px;width:10px;height:8px;background:#dcdcdc;"></div>
<div class="b" style="left:231px;top:161px;width:10px;height:8px;background:#c8c8c8;"></div>
<div class="b" style="left:241px;top:161px;width:10px;height:8px;background:#d4d4d4;"></div>
<div class="t" style="left:1217.00px;top:145.69px;font-size:16px;line-height:22px;color:#2b2b2b;letter-spacing:0.676px;-webkit-text-stroke:0.33px #2b2b2b;">SR в сделку (%) по источнику [7sites]</div>
<div class="b" style="left:1222px;top:180.5px;width:25px;height:14px;background:#3CCCCB;border-radius:3px;"></div>
<div class="t" style="left:1252.50px;top:179.14px;font-size:12px;line-height:17px;color:#333;letter-spacing:0.463px;">Электронная почта</div>
<div class="b" style="left:1377px;top:180.5px;width:25px;height:14px;background:#5AC189;border-radius:3px;"></div>
<div class="t" style="left:1407.50px;top:179.14px;font-size:12px;line-height:17px;color:#333;letter-spacing:0.253px;">Выставка</div>
<div class="b" style="left:1472.5px;top:180.5px;width:25px;height:14px;background:#8FD3E4;border-radius:3px;"></div>
<div class="t" style="left:1502.50px;top:179.14px;font-size:12px;line-height:17px;color:#333;letter-spacing:0.441px;">CRM-форма</div>
<div class="b" style="left:1585.5px;top:180.5px;width:25px;height:14px;background:#FDE380;border-radius:3px;"></div>
<div class="t" style="left:1615.50px;top:179.14px;font-size:12px;line-height:17px;color:#333;letter-spacing:-0.494px;">ВК</div>
<svg style="left:1638px;top:179.5px" width="12" height="16" viewBox="0 0 12 16"><path d="M10.7 0.9 L1.3 8 L10.7 15.1 Z" fill="#aaaaaa"/></svg>
<div class="t" style="left:1658.50px;top:179.14px;font-size:12px;line-height:17px;color:#333;letter-spacing:1.159px;">1/4</div>
<svg style="left:1686px;top:179.5px" width="12" height="16" viewBox="0 0 12 16"><path d="M1.3 0.9 L10.9 8 L1.3 15.1 Z" fill="#2f4554"/></svg>
<div class="b" style="left:1706px;top:178.0px;width:25px;height:18px;border:1px solid #5a5a5a;border-radius:9px;"></div>
<div class="t" style="left:1711.50px;top:179.14px;font-size:12px;line-height:17px;color:#808080;letter-spacing:0.332px;">All</div>
<div class="b" style="left:1738.5px;top:178.0px;width:27.5px;height:18px;border:1px solid #5a5a5a;border-radius:9px;"></div>
<div class="t" style="left:1744.45px;top:179.14px;font-size:12px;line-height:17px;color:#808080;letter-spacing:-0.254px;">Inv</div>
<svg style="left:0;top:0" width="1908" height="943" viewBox="0 0 1908 943"><path d="M1494.00 241.00 A111.5 111.5 0 0 1 1543.49 452.41 L1515.08 395.06 A47.5 47.5 0 0 0 1494.00 305.00 Z" fill="#3CCCCB"/><path d="M1543.49 452.41 A111.5 111.5 0 0 1 1405.30 284.93 L1456.21 323.72 A47.5 47.5 0 0 0 1515.08 395.06 Z" fill="#5AC189"/><path d="M1405.30 284.93 A111.5 111.5 0 0 1 1437.02 256.66 L1469.73 311.67 A47.5 47.5 0 0 0 1456.21 323.72 Z" fill="#8FD3E4"/><path d="M1437.02 256.66 A111.5 111.5 0 0 1 1467.64 244.16 L1482.77 306.35 A47.5 47.5 0 0 0 1469.73 311.67 Z" fill="#FDE380"/><path d="M1467.64 244.16 A111.5 111.5 0 0 1 1493.40 241.00 L1493.75 305.00 A47.5 47.5 0 0 0 1482.77 306.35 Z" fill="#ACE1C4"/><path d="M1493.40 241.00 A111.5 111.5 0 0 1 1494.00 241.00 L1494.00 305.00 A47.5 47.5 0 0 0 1493.75 305.00 Z" fill="#9EE5E5"/><polyline points="1478.0,225.5 1493.5,225.5 1493.5,240.0" stroke="#9EE5E5" stroke-width="1" fill="none"/><polyline points="1494.5,240.0 1494.5,225.5 1509.5,225.5" stroke="#FEC0A1" stroke-width="1" fill="none"/><path d="M1425 239.5 L1446 239.5 Q1468 240 1482 241.5" stroke="#ACE1C4" stroke-width="1" fill="none"/><path d="M1404 254.5 L1425 254.5 Q1445 251 1458 246.5" stroke="#FDE380" stroke-width="1" fill="none"/><path d="M1389 267.5 L1408 267.5 L1422 270" stroke="#8FD3E4" stroke-width="1" fill="none"/><polyline points="1603.0,327.0 1617.0,323.5 1632.0,323.5" stroke="#3CCCCB" stroke-width="1" fill="none"/><polyline points="1381.0,432.5 1396.0,432.5 1407.0,425.0" stroke="#5AC189" stroke-width="1" fill="none"/></svg>
<div class="t" style="left:1389.50px;top:217.14px;font-size:12px;line-height:17px;color:#1c1c1c;letter-spacing:0.383px;">Звонок: 0.09%</div>
<div class="t" style="left:1514.50px;top:217.14px;font-size:12px;line-height:17px;color:#1c1c1c;letter-spacing:0.333px;">Telegram - Открытая линия 20: 0.00%</div>
<div class="t" style="left:1232.50px;top:231.14px;font-size:12px;line-height:17px;color:#1c1c1c;letter-spacing:0.312px;">Telegram - Чат-бот сайта: 3.71%</div>
<div class="t" style="left:1288.50px;top:245.14px;font-size:12px;line-height:17px;color:#1c1c1c;letter-spacing:0.296px;">ВКонтакте - Откр...</div>
<div class="t" style="left:1270.50px;top:259.14px;font-size:12px;line-height:17px;color:#1c1c1c;letter-spacing:0.223px;">CRM-форма: 6.10%</div>
<div class="t" style="left:1637.50px;top:315.14px;font-size:12px;line-height:17px;color:#1c1c1c;letter-spacing:0.245px;">Электронна...</div>
<div class="t" style="left:1274.00px;top:423.64px;font-size:12px;line-height:17px;color:#1c1c1c;letter-spacing:0.094px;">Выставка: 42.68%</div>
<div class="t" style="left:1217.00px;top:561.69px;font-size:16px;line-height:22px;color:#2b2b2b;letter-spacing:0.615px;-webkit-text-stroke:0.33px #2b2b2b;">SR в успех (%) по источнику [7sites]</div>
<div class="b" style="left:1222px;top:596.5px;width:25px;height:14px;background:#1FA8C9;border-radius:3px;"></div>
<div class="t" style="left:1253.50px;top:595.14px;font-size:12px;line-height:17px;color:#333;letter-spacing:0.261px;">&lt;NULL&gt;</div>
<div class="b" style="left:1311px;top:596.5px;width:25px;height:14px;background:#3CCCCB;border-radius:3px;"></div>
<div class="t" style="left:1341.00px;top:595.14px;font-size:12px;line-height:17px;color:#333;letter-spacing:0.463px;">Электронная почта</div>
<div class="b" style="left:1466px;top:596.5px;width:25px;height:14px;background:#ACE1C4;border-radius:3px;"></div>
<div class="b" style="left:1490px;top:590px;width:139.5px;height:28px;overflow:hidden;">
<div class="t" style="left:6.50px;top:-590px;margin-top:595.14px;font-size:12px;line-height:17px;color:#333;letter-spacing:0.372px;">Telegram - Чат-бот сайта</div>
</div>
<svg style="left:1638px;top:595.5px" width="12" height="16" viewBox="0 0 12 16"><path d="M10.7 0.9 L1.3 8 L10.7 15.1 Z" fill="#aaaaaa"/></svg>
<div class="t" style="left:1658.50px;top:595.14px;font-size:12px;line-height:17px;color:#333;letter-spacing:1.159px;">1/3</div>
<svg style="left:1686px;top:595.5px" width="12" height="16" viewBox="0 0 12 16"><path d="M1.3 0.9 L10.9 8 L1.3 15.1 Z" fill="#2f4554"/></svg>
<div class="b" style="left:1706px;top:594.0px;width:25px;height:18px;border:1px solid #5a5a5a;border-radius:9px;"></div>
<div class="t" style="left:1711.50px;top:595.14px;font-size:12px;line-height:17px;color:#808080;letter-spacing:0.332px;">All</div>
<div class="b" style="left:1738.5px;top:594.0px;width:27.5px;height:18px;border:1px solid #5a5a5a;border-radius:9px;"></div>
<div class="t" style="left:1744.45px;top:595.14px;font-size:12px;line-height:17px;color:#808080;letter-spacing:-0.254px;">Inv</div>
<svg style="left:0;top:0" width="1908" height="943" viewBox="0 0 1908 943"><path d="M1494.00 656.80 A111.5 111.5 0 0 1 1565.10 854.19 L1524.29 804.89 A47.5 47.5 0 0 0 1494.00 720.80 Z" fill="#1FA8C9"/><path d="M1565.10 854.19 A111.5 111.5 0 0 1 1386.76 798.81 L1448.31 781.30 A47.5 47.5 0 0 0 1524.29 804.89 Z" fill="#3CCCCB"/><path d="M1386.76 798.81 A111.5 111.5 0 0 1 1410.05 694.92 L1458.24 737.04 A47.5 47.5 0 0 0 1448.31 781.30 Z" fill="#ACE1C4"/><path d="M1410.05 694.92 A111.5 111.5 0 0 1 1494.00 656.80 L1494.00 720.80 A47.5 47.5 0 0 0 1458.24 737.04 Z" fill="#8FD3E4"/><polyline points="1426.0,652.5 1441.0,652.5 1447.5,666.5" stroke="#8FD3E4" stroke-width="1" fill="none"/><polyline points="1599.0,730.5 1614.0,725.5 1628.5,725.5" stroke="#1FA8C9" stroke-width="1" fill="none"/><polyline points="1355.0,740.5 1366.0,740.5 1385.0,744.5" stroke="#ACE1C4" stroke-width="1" fill="none"/><polyline points="1441.0,889.5 1456.0,889.5 1460.5,875.5" stroke="#3CCCCB" stroke-width="1" fill="none"/></svg>
<div class="t" style="left:1300.50px;top:643.64px;font-size:12px;line-height:17px;color:#1c1c1c;letter-spacing:0.260px;">CRM-форма: 13.57%</div>
<div class="t" style="left:1634.50px;top:716.64px;font-size:12px;line-height:17px;color:#1c1c1c;letter-spacing:0.264px;">&lt;NULL&gt;: 38.99%</div>
<div class="t" style="left:1243.50px;top:731.64px;font-size:12px;line-height:17px;color:#1c1c1c;letter-spacing:0.345px;">Telegram - Чат-б...</div>
<div class="t" style="left:1273.00px;top:880.64px;font-size:12px;line-height:17px;color:#1c1c1c;letter-spacing:0.377px;">Электронная почта: 31.59%</div>
<div class="b" style="left:1837px;top:0px;width:71px;height:943px;background:#eef2f4;"></div>
<div class="b" style="left:1837px;top:0px;width:1px;height:943px;background:#dae4e8;"></div>
<div class="b" style="left:1854px;top:3px;width:32px;height:32px;background:#dfe3e6;border-radius:5px;"></div>
<svg style="left:1862px;top:11px" width="16" height="16" viewBox="0 0 16 16"><circle cx="8" cy="8" r="7.6" fill="#525c69"/><path d="M5.7 6.4 C5.7 4.9 6.7 4.1 8.05 4.1 C9.4 4.1 10.35 4.9 10.35 6.05 C10.35 7.0 9.8 7.45 9.2 7.9 C8.6 8.35 8.4 8.6 8.4 9.4" stroke="#e6e9ec" stroke-width="1.7" fill="none"/><circle cx="8.35" cy="11.6" r="1.05" fill="#e6e9ec"/></svg>
<div class="b" style="left:1849px;top:51px;width:43px;height:1px;background:#dfe3e6;"></div>
<div class="b" style="left:1849px;top:206px;width:43px;height:1px;background:#dfe3e6;"></div>
<div class="b" style="left:1854px;top:66px;width:34px;height:34px;background:#e1e5e8;border-radius:50%;"></div>
<div class="b" style="left:1854px;top:112px;width:34px;height:34px;background:#e1e5e8;border-radius:50%;"></div>
<div class="b" style="left:1854px;top:158px;width:34px;height:34px;background:#e1e5e8;border-radius:50%;"></div>
<svg style="left:1861px;top:73px" width="20" height="20" viewBox="0 0 20 20"><path d="M14.4 3.3 A8 8 0 1 0 17.8 11.8" stroke="#525c69" stroke-width="1.8" fill="none" stroke-linecap="round"/><circle cx="10" cy="10" r="5.2" fill="#525c69"/><path d="M9.2 6.6 L10 8.6 L12 9.4 L10 10.2 L9.2 12.2 L8.4 10.2 L6.4 9.4 L8.4 8.6 Z" fill="#e1e5e8"/><path d="M12.3 10.6 L12.8 11.7 L13.9 12.2 L12.8 12.7 L12.3 13.8 L11.8 12.7 L10.7 12.2 L11.8 11.7 Z" fill="#e1e5e8"/></svg>
<svg style="left:1862px;top:119px" width="18" height="20" viewBox="0 0 18 20"><path d="M9 1.2 C9.8 1.2 10.3 1.7 10.3 2.4 C13 3 14.4 5.2 14.4 8 V11.5 L16.2 14.2 V15 H1.8 V14.2 L3.6 11.5 V8 C3.6 5.2 5 3 7.7 2.4 C7.7 1.7 8.2 1.2 9 1.2 Z" fill="#525c69"/><path d="M7.2 16.3 H10.8 C10.8 17.3 10 18 9 18 C8 18 7.2 17.3 7.2 16.3 Z" fill="#525c69"/></svg>
<svg style="left:1860px;top:164px" width="22" height="22" viewBox="0 0 22 22"><path d="M10.6 2.3 A8.4 8.4 0 1 0 15.6 17.9 L19.2 19.3 L17.6 16.0 A8.4 8.4 0 0 0 10.6 2.3 Z" stroke="#525c69" stroke-width="1.9" fill="none" stroke-linejoin="round"/><path d="M17 17 L19.6 19.6 L15.4 18.6 Z" fill="#525c69"/><path d="M15 8.1 H6.6 M8.8 5.9 L6.4 8.1 L8.8 10.3 M6.4 13.1 H14.8 M12.6 10.9 L15 13.1 L12.6 15.3" stroke="#525c69" stroke-width="1.4" fill="none"/></svg>
<svg style="left:1861.5px;top:216.5px" width="20" height="20" viewBox="0 0 20 20"><circle cx="7.6" cy="7.6" r="5.3" stroke="#525c69" stroke-width="1.9" fill="none"/><path d="M11.6 11.6 L17.6 17.6" stroke="#525c69" stroke-width="2.2" stroke-linecap="round"/></svg>
<div class="b" style="left:1869px;top:251.0px;width:10px;height:10.1px;background:#e0eeee;"></div>
<div class="b" style="left:1859px;top:261.0px;width:10px;height:10.1px;background:#a0d8d5;"></div>
<div class="b" style="left:1869px;top:261.0px;width:10px;height:10.1px;background:#8ed3cf;"></div>
<div class="b" style="left:1879px;top:261.0px;width:10px;height:10.1px;background:#b0e0dc;"></div>
<div class="b" style="left:1849px;top:271.0px;width:10px;height:10.1px;background:#a0d8d5;"></div>
<div class="b" style="left:1859px;top:271.0px;width:10px;height:10.1px;background:#d8efee;"></div>
<div class="b" style="left:1869px;top:271.0px;width:10px;height:10.1px;background:#8ed3cf;"></div>
<div class="b" style="left:1879px;top:271.0px;width:10px;height:10.1px;background:#d0ecea;"></div>
<div class="b" style="left:1849px;top:281.1px;width:10px;height:10.1px;background:#e8f0f2;"></div>
<div class="b" style="left:1859px;top:281.1px;width:10px;height:10.1px;background:#cdeae8;"></div>
<div class="b" style="left:1869px;top:281.1px;width:10px;height:10.1px;background:#c8e8e6;"></div>
<div class="b" style="left:1879px;top:281.1px;width:10px;height:10.1px;background:#e4f0f0;"></div>
<div class="b" style="left:1869px;top:291.1px;width:10px;height:10.1px;background:#c0e6e4;"></div>
<div class="b" style="left:1859px;top:301.1px;width:10px;height:10.1px;background:#f2cdd8;"></div>
<div class="b" style="left:1869px;top:301.1px;width:10px;height:10.1px;background:#f3b0c3;"></div>
<div class="b" style="left:1849px;top:311.2px;width:10px;height:10.1px;background:#f0d8e2;"></div>
<div class="b" style="left:1859px;top:311.2px;width:10px;height:10.1px;background:#f5d8e0;"></div>
<div class="b" style="left:1869px;top:311.2px;width:10px;height:10.1px;background:#f4a8bc;"></div>
<div class="b" style="left:1879px;top:311.2px;width:10px;height:10.1px;background:#f3b8c8;"></div>
<div class="b" style="left:1849px;top:321.2px;width:10px;height:10.1px;background:#f0c8d6;"></div>
<div class="b" style="left:1859px;top:321.2px;width:10px;height:10.1px;background:#f4a6bc;"></div>
<div class="b" style="left:1869px;top:321.2px;width:10px;height:10.1px;background:#f39ab4;"></div>
<div class="b" style="left:1879px;top:321.2px;width:10px;height:10.1px;background:#f3b4c6;"></div>
<div class="b" style="left:1859px;top:331.2px;width:10px;height:10.1px;background:#f2ccd8;"></div>
<div class="b" style="left:1869px;top:331.2px;width:10px;height:10.1px;background:#f0c6d4;"></div>
<div class="b" style="left:1879px;top:331.2px;width:10px;height:10.1px;background:#efd8e2;"></div>
<div class="b" style="left:1859px;top:351.3px;width:10px;height:10.1px;background:#ebe6e0;"></div>
<div class="b" style="left:1869px;top:351.3px;width:10px;height:10.1px;background:#ecc888;"></div>
<div class="b" style="left:1879px;top:351.3px;width:10px;height:10.1px;background:#f3f5f6;"></div>
<div class="b" style="left:1849px;top:361.3px;width:10px;height:10.1px;background:#f2f4f6;"></div>
<div class="b" style="left:1859px;top:361.3px;width:10px;height:10.1px;background:#c8a87a;"></div>
<div class="b" style="left:1869px;top:361.3px;width:10px;height:10.1px;background:#cbb0a0;"></div>
<div class="b" style="left:1879px;top:361.3px;width:10px;height:10.1px;background:#e4dcd8;"></div>
<div class="b" style="left:1849px;top:371.4px;width:10px;height:10.1px;background:#f0f3f4;"></div>
<div class="b" style="left:1859px;top:371.4px;width:10px;height:10.1px;background:#d6c8be;"></div>
<div class="b" style="left:1869px;top:371.4px;width:10px;height:10.1px;background:#c4a0a4;"></div>
<div class="b" style="left:1879px;top:371.4px;width:10px;height:10.1px;background:#dccdc6;"></div>
<div class="b" style="left:1859px;top:381.4px;width:10px;height:10.1px;background:#f0f3f5;"></div>
<div class="b" style="left:1869px;top:381.4px;width:10px;height:10.1px;background:#e4e0e6;"></div>
<div class="b" style="left:1879px;top:381.4px;width:10px;height:10.1px;background:#eeeff2;"></div>
<div class="b" style="left:1859px;top:391.4px;width:10px;height:10.1px;background:#e8ebf4;"></div>
<div class="b" style="left:1869px;top:391.4px;width:10px;height:10.1px;background:#e8edf6;"></div>
<div class="b" style="left:1879px;top:391.4px;width:10px;height:10.1px;background:#e8ebf4;"></div>
<div class="b" style="left:1849px;top:401.5px;width:10px;height:10.1px;background:#dfe0f2;"></div>
<div class="b" style="left:1859px;top:401.5px;width:10px;height:10.1px;background:#a8a4e0;"></div>
<div class="b" style="left:1869px;top:401.5px;width:10px;height:10.1px;background:#a8b0e4;"></div>
<div class="b" style="left:1879px;top:401.5px;width:10px;height:10.1px;background:#c8c4e8;"></div>
<div class="b" style="left:1849px;top:411.5px;width:10px;height:10.1px;background:#d4c8e8;"></div>
<div class="b" style="left:1859px;top:411.5px;width:10px;height:10.1px;background:#d8c8ea;"></div>
<div class="b" style="left:1869px;top:411.5px;width:10px;height:10.1px;background:#e09aaa;"></div>
<div class="b" style="left:1879px;top:411.5px;width:10px;height:10.1px;background:#f4dcdc;"></div>
<div class="b" style="left:1849px;top:421.5px;width:10px;height:10.1px;background:#ecedf2;"></div>
<div class="b" style="left:1859px;top:421.5px;width:10px;height:10.1px;background:#f4c8a0;"></div>
<div class="b" style="left:1869px;top:421.5px;width:10px;height:10.1px;background:#f4b488;"></div>
<div class="b" style="left:1879px;top:421.5px;width:10px;height:10.1px;background:#f2e4e0;"></div>
<div class="b" style="left:1859px;top:441.6px;width:10px;height:10.1px;background:#c4c4c4;"></div>
<div class="b" style="left:1869px;top:441.6px;width:10px;height:10.1px;background:#cac8c4;"></div>
<div class="b" style="left:1879px;top:441.6px;width:10px;height:10.1px;background:#e6e8e8;"></div>
<div class="b" style="left:1859px;top:451.6px;width:10px;height:10.1px;background:#a89890;"></div>
<div class="b" style="left:1869px;top:451.6px;width:10px;height:10.1px;background:#c8a898;"></div>
<div class="b" style="left:1879px;top:451.6px;width:10px;height:10.1px;background:#e2deda;"></div>
<div class="b" style="left:1859px;top:461.7px;width:10px;height:10.1px;background:#989088;"></div>
<div class="b" style="left:1869px;top:461.7px;width:10px;height:10.1px;background:#d0b4a0;"></div>
<div class="b" style="left:1879px;top:461.7px;width:10px;height:10.1px;background:#eef0f2;"></div>
<div class="b" style="left:1869px;top:471.7px;width:10px;height:10.1px;background:#dcccc0;"></div>
<div class="b" style="left:1859px;top:491.8px;width:10px;height:10.1px;background:#e6e6e4;"></div>
<div class="b" style="left:1869px;top:491.8px;width:10px;height:10.1px;background:#ecdcd0;"></div>
<div class="b" style="left:1879px;top:491.8px;width:10px;height:10.1px;background:#f2f3f5;"></div>
<div class="b" style="left:1859px;top:501.8px;width:10px;height:10.1px;background:#c8b0a4;"></div>
<div class="b" style="left:1869px;top:501.8px;width:10px;height:10.1px;background:#c8aca0;"></div>
<div class="b" style="left:1879px;top:501.8px;width:10px;height:10.1px;background:#e8d6d0;"></div>
<div class="b" style="left:1859px;top:511.8px;width:10px;height:10.1px;background:#e0cc88;"></div>
<div class="b" style="left:1869px;top:511.8px;width:10px;height:10.1px;background:#dcc8a8;"></div>
<div class="b" style="left:1879px;top:511.8px;width:10px;height:10.1px;background:#e8dca0;"></div>
<div class="b" style="left:1859px;top:531.9px;width:10px;height:10.1px;background:#c8d8e8;"></div>
<div class="b" style="left:1869px;top:531.9px;width:10px;height:10.1px;background:#c8d4e6;"></div>
<div class="b" style="left:1879px;top:531.9px;width:10px;height:10.1px;background:#dae4ee;"></div>
<div class="b" style="left:1849px;top:541.9px;width:10px;height:10.1px;background:#dfe6ee;"></div>
<div class="b" style="left:1859px;top:541.9px;width:10px;height:10.1px;background:#c0d4e2;"></div>
<div class="b" style="left:1869px;top:541.9px;width:10px;height:10.1px;background:#989098;"></div>
<div class="b" style="left:1879px;top:541.9px;width:10px;height:10.1px;background:#d8e2ec;"></div>
<div class="b" style="left:1849px;top:552.0px;width:10px;height:10.1px;background:#d0ced4;"></div>
<div class="b" style="left:1859px;top:552.0px;width:10px;height:10.1px;background:#a09aa4;"></div>
<div class="b" style="left:1869px;top:552.0px;width:10px;height:10.1px;background:#948c94;"></div>
<div class="b" style="left:1879px;top:552.0px;width:10px;height:10.1px;background:#ccc6c8;"></div>
<div class="b" style="left:1859px;top:562.0px;width:10px;height:10.1px;background:#c8c8d8;"></div>
<div class="b" style="left:1869px;top:562.0px;width:10px;height:10.1px;background:#c0c4d4;"></div>
<div class="b" style="left:1879px;top:562.0px;width:10px;height:10.1px;background:#d6d6de;"></div>
<div class="b" style="left:1859px;top:582.1px;width:10px;height:10.1px;background:#cdeceb;"></div>
<div class="b" style="left:1869px;top:582.1px;width:10px;height:10.1px;background:#6ecbc8;"></div>
<div class="b" style="left:1879px;top:582.1px;width:10px;height:10.1px;background:#9edcd8;"></div>
<div class="b" style="left:1849px;top:592.1px;width:10px;height:10.1px;background:#a0dcd8;"></div>
<div class="b" style="left:1859px;top:592.1px;width:10px;height:10.1px;background:#e0f2f2;"></div>
<div class="b" style="left:1869px;top:592.1px;width:10px;height:10.1px;background:#88d4d0;"></div>
<div class="b" style="left:1879px;top:592.1px;width:10px;height:10.1px;background:#eef4f6;"></div>
<div class="b" style="left:1849px;top:602.1px;width:10px;height:10.1px;background:#d0ecec;"></div>
<div class="b" style="left:1859px;top:602.1px;width:10px;height:10.1px;background:#a0dedc;"></div>
<div class="b" style="left:1869px;top:602.1px;width:10px;height:10.1px;background:#90d8d4;"></div>
<div class="b" style="left:1879px;top:602.1px;width:10px;height:10.1px;background:#e4f0f0;"></div>
<div class="b" style="left:1859px;top:612.2px;width:10px;height:10.1px;background:#c8e8e8;"></div>
<div class="b" style="left:1869px;top:612.2px;width:10px;height:10.1px;background:#c4e6e6;"></div>
<div class="b" style="left:1879px;top:612.2px;width:10px;height:10.1px;background:#e4eff0;"></div>
<div class="b" style="left:1849px;top:632.2px;width:10px;height:10.1px;background:#f0f0f0;"></div>
<div class="b" style="left:1859px;top:632.2px;width:10px;height:10.1px;background:#f0e8e4;"></div>
<div class="b" style="left:1869px;top:632.2px;width:10px;height:10.1px;background:#d4bcb0;"></div>
<div class="b" style="left:1879px;top:632.2px;width:10px;height:10.1px;background:#f2eff0;"></div>
<div class="b" style="left:1849px;top:642.3px;width:10px;height:10.1px;background:#f0ebe8;"></div>
<div class="b" style="left:1859px;top:642.3px;width:10px;height:10.1px;background:#a89888;"></div>
<div class="b" style="left:1869px;top:642.3px;width:10px;height:10.1px;background:#d0b4a8;"></div>
<div class="b" style="left:1879px;top:642.3px;width:10px;height:10.1px;background:#e4d8d4;"></div>
<div class="b" style="left:1859px;top:652.3px;width:10px;height:10.1px;background:#d0d0c8;"></div>
<div class="b" style="left:1869px;top:652.3px;width:10px;height:10.1px;background:#e0cc80;"></div>
<div class="b" style="left:1879px;top:652.3px;width:10px;height:10.1px;background:#eeeff0;"></div>
<div class="b" style="left:1849px;top:672.4px;width:10px;height:10.1px;background:#eaeef0;"></div>
<div class="b" style="left:1859px;top:672.4px;width:10px;height:10.1px;background:#bcc0c4;"></div>
<div class="b" style="left:1869px;top:672.4px;width:10px;height:10.1px;background:#ccd0e0;"></div>
<div class="b" style="left:1879px;top:672.4px;width:10px;height:10.1px;background:#dfe4e8;"></div>
<div class="b" style="left:1849px;top:682.4px;width:10px;height:10.1px;background:#b4bcc0;"></div>
<div class="b" style="left:1859px;top:682.4px;width:10px;height:10.1px;background:#a89c98;"></div>
<div class="b" style="left:1869px;top:682.4px;width:10px;height:10.1px;background:#b49c98;"></div>
<div class="b" style="left:1879px;top:682.4px;width:10px;height:10.1px;background:#a0a8a8;"></div>
<div class="b" style="left:1849px;top:692.4px;width:10px;height:10.1px;background:#d8dce0;"></div>
<div class="b" style="left:1859px;top:692.4px;width:10px;height:10.1px;background:#a89c98;"></div>
<div class="b" style="left:1869px;top:692.4px;width:10px;height:10.1px;background:#a89898;"></div>
<div class="b" style="left:1879px;top:692.4px;width:10px;height:10.1px;background:#d4ccc8;"></div>
<div class="b" style="left:1859px;top:712.5px;width:10px;height:10.1px;background:#d4f0f2;"></div>
<div class="b" style="left:1869px;top:712.5px;width:10px;height:10.1px;background:#d0eef0;"></div>
<div class="b" style="left:1879px;top:712.5px;width:10px;height:10.1px;background:#e4f2f2;"></div>
<div class="b" style="left:1849px;top:722.5px;width:10px;height:10.1px;background:#d8f0f4;"></div>
<div class="b" style="left:1859px;top:722.5px;width:10px;height:10.1px;background:#b0ecdc;"></div>
<div class="b" style="left:1869px;top:722.5px;width:10px;height:10.1px;background:#b0ece0;"></div>
<div class="b" style="left:1879px;top:722.5px;width:10px;height:10.1px;background:#b8e8f4;"></div>
<div class="b" style="left:1849px;top:732.6px;width:10px;height:10.1px;background:#c0ecf4;"></div>
<div class="b" style="left:1859px;top:732.6px;width:10px;height:10.1px;background:#d8f6ee;"></div>
<div class="b" style="left:1869px;top:732.6px;width:10px;height:10.1px;background:#d8f6f0;"></div>
<div class="b" style="left:1879px;top:732.6px;width:10px;height:10.1px;background:#c8e8f4;"></div>
<div class="b" style="left:1859px;top:742.6px;width:10px;height:10.1px;background:#88d0f4;"></div>
<div class="b" style="left:1869px;top:742.6px;width:10px;height:10.1px;background:#6cc8f4;"></div>
<div class="b" style="left:1879px;top:742.6px;width:10px;height:10.1px;background:#a0d4f4;"></div>
<div class="b" style="left:1859px;top:762.6px;width:10px;height:10.1px;background:#f2f3f5;"></div>
<div class="b" style="left:1869px;top:762.6px;width:10px;height:10.1px;background:#f3f4f6;"></div>
<div class="b" style="left:1879px;top:762.6px;width:10px;height:10.1px;background:#eff1f3;"></div>
<div class="b" style="left:1859px;top:772.7px;width:10px;height:10.1px;background:#dccac0;"></div>
<div class="b" style="left:1869px;top:772.7px;width:10px;height:10.1px;background:#ccb8b0;"></div>
<div class="b" style="left:1879px;top:772.7px;width:10px;height:10.1px;background:#d8ccc8;"></div>
<div class="b" style="left:1859px;top:782.7px;width:10px;height:10.1px;background:#a89c90;"></div>
<div class="b" style="left:1869px;top:782.7px;width:10px;height:10.1px;background:#bca490;"></div>
<div class="b" style="left:1879px;top:782.7px;width:10px;height:10.1px;background:#e8d8cc;"></div>
<div class="b" style="left:1859px;top:792.7px;width:10px;height:10.1px;background:#eef2f2;"></div>
<div class="b" style="left:1869px;top:792.7px;width:10px;height:10.1px;background:#e8dc98;"></div>
<div class="b" style="left:1859px;top:812.8px;width:10px;height:10.1px;background:#a4c8e4;"></div>
<div class="b" style="left:1869px;top:812.8px;width:10px;height:10.1px;background:#9cc8e0;"></div>
<div class="b" style="left:1879px;top:812.8px;width:10px;height:10.1px;background:#b8d4e8;"></div>
<div class="b" style="left:1849px;top:822.8px;width:10px;height:10.1px;background:#b0d0e8;"></div>
<div class="b" style="left:1859px;top:822.8px;width:10px;height:10.1px;background:#e0eef6;"></div>
<div class="b" style="left:1869px;top:822.8px;width:10px;height:10.1px;background:#f0f4f8;"></div>
<div class="b" style="left:1879px;top:822.8px;width:10px;height:10.1px;background:#eef2f6;"></div>
<div class="b" style="left:1849px;top:832.9px;width:10px;height:10.1px;background:#e4ecf4;"></div>
<div class="b" style="left:1859px;top:832.9px;width:10px;height:10.1px;background:#a4cce4;"></div>
<div class="b" style="left:1869px;top:832.9px;width:10px;height:10.1px;background:#88bcdc;"></div>
<div class="b" style="left:1879px;top:832.9px;width:10px;height:10.1px;background:#c4dcec;"></div>
<div class="b" style="left:1859px;top:842.9px;width:10px;height:10.1px;background:#e8f0f4;"></div>
<div class="b" style="left:1869px;top:842.9px;width:10px;height:10.1px;background:#c4deec;"></div>
<div class="b" style="left:1859px;top:852.9px;width:10px;height:10.1px;background:#f0dce4;"></div>
<div class="b" style="left:1869px;top:852.9px;width:10px;height:10.1px;background:#f4a8bc;"></div>
<div class="b" style="left:1849px;top:863.0px;width:10px;height:10.1px;background:#f0e0e8;"></div>
<div class="b" style="left:1859px;top:863.0px;width:10px;height:10.1px;background:#f4a4bc;"></div>
<div class="b" style="left:1869px;top:863.0px;width:10px;height:10.1px;background:#f49cb4;"></div>
<div class="b" style="left:1879px;top:863.0px;width:10px;height:10.1px;background:#f4bccc;"></div>
<div class="b" style="left:1846.5px;top:885.5px;width:47.5px;height:47.5px;background:#f1f2f3;border-radius:50%;box-shadow:0 1px 5px 1px rgba(0,0,0,0.10);"></div>
<svg style="left:1860px;top:900px" width="20" height="18" viewBox="0 0 20 18"><circle cx="2.6" cy="3.6" r="1.5" fill="#a8adb4"/><path d="M6 3.6 H18.6 M2 9 H18.6 M2 14.4 H18.6" stroke="#a8adb4" stroke-width="2.1"/></svg>
</div></body></html>
